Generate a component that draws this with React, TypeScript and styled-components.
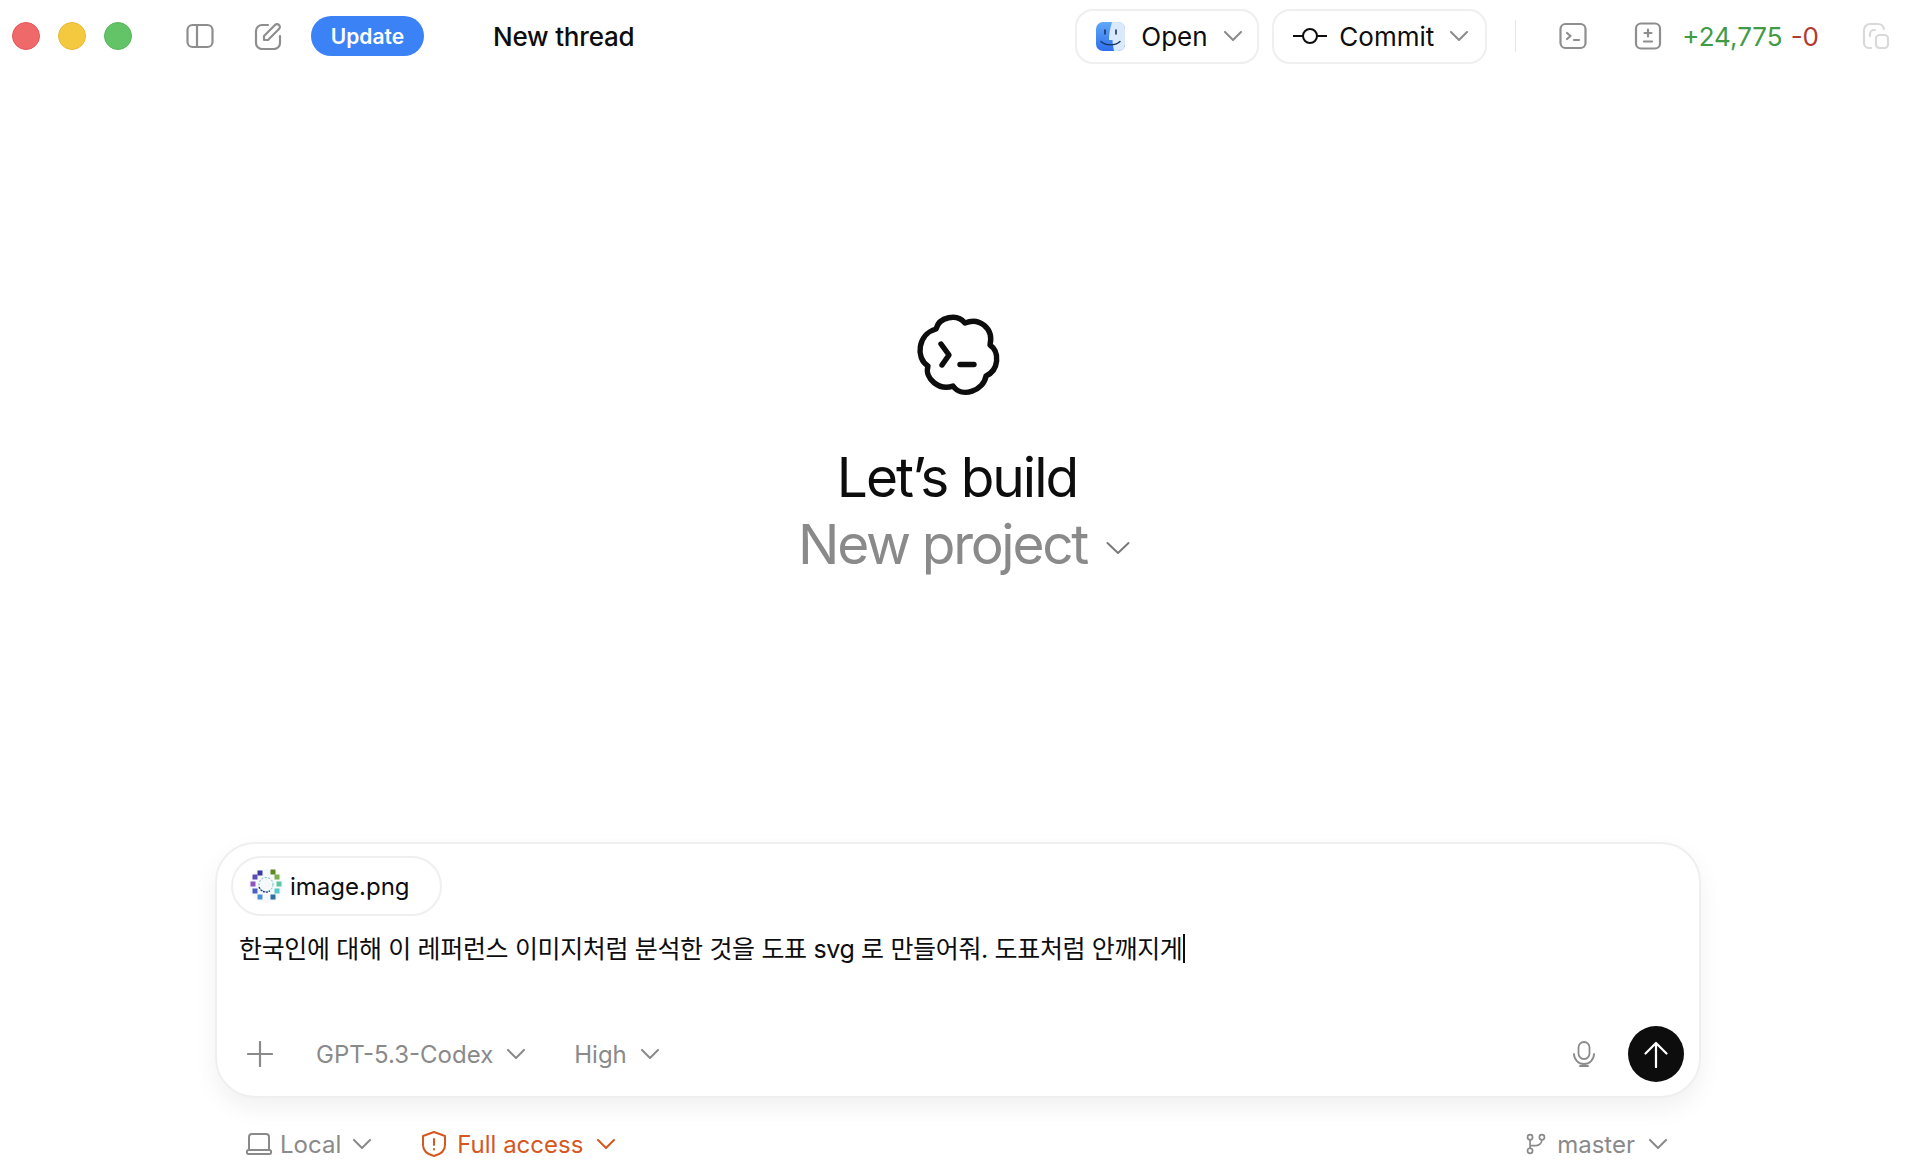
import styled, { createGlobalStyle } from "styled-components";

const GlobalStyle = createGlobalStyle`
    html, body {
        margin: 0;
        padding: 0;
        background: #ffffff;
    }
    body {
        font-family: Inter, "Noto Sans CJK KR", sans-serif;
        color: #0d0d0d;
    }
`;

const Page = styled.div`
    height: 100vh;
    display: flex;
    flex-direction: column;
    overflow: hidden;
`;

const TopBar = styled.header`
    height: 72px;
    flex: none;
    display: flex;
    align-items: center;
    padding: 0 34px 0 12px;
`;

const Lights = styled.div`
    display: flex;
    gap: 18px;
    margin-right: 54px;
`;

const Light = styled.span<{ $color: string; $edge: string }>`
    width: 28px;
    height: 28px;
    border-radius: 50%;
    box-sizing: border-box;
    background: ${(p) => p.$color};
    border: 1px solid ${(p) => p.$edge};
`;

const BarIcon = styled.svg<{ $after: number; $faint?: boolean }>`
    flex: none;
    width: 28px;
    height: 28px;
    margin-right: ${(p) => p.$after}px;
    fill: none;
    stroke: ${(p) => (p.$faint ? "#d9d9d9" : "#8e8e8e")};
    stroke-width: 2.2;
    stroke-linecap: round;
    stroke-linejoin: round;
`;

const UpdateButton = styled.button`
    width: 113px;
    height: 40px;
    border: 0;
    border-radius: 20px;
    background: #3b82f6;
    color: #ffffff;
    font: 600 21px Inter, sans-serif;
    padding: 0;
    margin-right: 69px;
`;

const ThreadTitle = styled.div`
    font-size: 26px;
    font-weight: 500;
    letter-spacing: -0.2px;
`;

const Spacer = styled.div`
    flex: 1;
`;

const BarButton = styled.div<{ $width: number; $after: number; $gap: number }>`
    box-sizing: border-box;
    width: ${(p) => p.$width}px;
    height: 55px;
    margin-right: ${(p) => p.$after}px;
    border: 2px solid #efefef;
    border-radius: 18px;
    display: flex;
    align-items: center;
    padding: 0 17px 0 19px;
    font-size: 26px;
    gap: ${(p) => p.$gap}px;
`;

const Divider = styled.div`
    width: 1px;
    height: 32px;
    background: #e6e6e6;
    margin-right: 43px;
`;

const DiffCount = styled.div`
    display: flex;
    gap: 8px;
    font-size: 26px;
    margin-right: 43px;
`;

const Added = styled.span`
    color: #3f9b45;
`;

const Removed = styled.span`
    color: #b03a30;
`;

const ChevronIcon = styled.svg<{ $push?: boolean }>`
    flex: none;
    width: 18px;
    height: 10px;
    margin-left: ${(p) => (p.$push ? "auto" : "0")};
    color: #8a8a8a;
    fill: none;
    stroke: currentColor;
    stroke-width: 2;
    stroke-linecap: round;
    stroke-linejoin: round;
`;

const Hero = styled.main`
    display: flex;
    flex-direction: column;
    align-items: center;
    padding: 236px 8px 0 0;
`;

const Logo = styled.svg`
    width: 96px;
    height: 96px;
    margin-bottom: 40px;
    fill: none;
    stroke: #0d0d0d;
    stroke-width: 5.4;
    stroke-linecap: round;
    stroke-linejoin: round;
`;

const Title = styled.h1`
    margin: 0 2px 0 0;
    font-size: 55px;
    line-height: 67px;
    font-weight: 400;
    letter-spacing: -2px;
`;

const ProjectRow = styled.div`
    display: flex;
    align-items: center;
    gap: 19px;
    margin-left: 12px;
    font-size: 55px;
    line-height: 67px;
    letter-spacing: -2.3px;
    color: #8a8a8a;
`;

const ProjectChevron = styled.svg`
    width: 24px;
    height: 14px;
    margin-top: 6px;
    fill: none;
    stroke: #7a7a7a;
    stroke-width: 2;
    stroke-linecap: round;
    stroke-linejoin: round;
`;

const Composer = styled.section`
    flex: none;
    box-sizing: border-box;
    width: 1486px;
    height: 256px;
    margin: auto 0 0 215px;
    border: 2px solid #efefef;
    border-radius: 40px;
    background: #ffffff;
    box-shadow: 0 10px 24px rgba(0, 0, 0, 0.06);
    padding: 12px 15px 14px 14px;
    display: flex;
    flex-direction: column;
`;

const Chip = styled.div`
    box-sizing: border-box;
    width: 211px;
    height: 60px;
    border: 2px solid #efefef;
    border-radius: 30px;
    display: flex;
    align-items: center;
    gap: 7px;
    padding-left: 16px;
    font-size: 24px;
`;

const Thumb = styled.svg`
    width: 34px;
    height: 34px;
    flex: none;
`;

const Prompt = styled.div`
    margin: 15px 0 0 8px;
    font-size: 25px;
    line-height: 36px;
    letter-spacing: -0.35px;
`;

const Caret = styled.span`
    display: inline-block;
    width: 2px;
    height: 29px;
    margin-left: 1px;
    vertical-align: -5px;
    background: #0d0d0d;
`;

const ComposerBar = styled.div`
    margin-top: auto;
    display: flex;
    align-items: center;
    color: #8a8a8a;
`;

const PlusIcon = styled.svg`
    flex: none;
    width: 26px;
    height: 26px;
    margin: 0 43px 0 16px;
    fill: none;
    stroke: #8a8a8a;
    stroke-width: 2.2;
    stroke-linecap: round;
`;

const Picker = styled.div<{ $after?: number }>`
    display: flex;
    align-items: center;
    gap: 14px;
    margin-right: ${(p) => p.$after ?? 0}px;
    font-size: 24px;
`;

const MicIcon = styled.svg`
    flex: none;
    width: 22px;
    height: 26px;
    margin: 0 33px 0 auto;
    fill: none;
    stroke: #8a8a8a;
    stroke-width: 1.8;
    stroke-linecap: round;
`;

const SendButton = styled.div`
    width: 56px;
    height: 56px;
    border-radius: 50%;
    background: #0d0d0d;
    display: flex;
    align-items: center;
    justify-content: center;
`;

const SendArrow = styled.svg`
    width: 24px;
    height: 27px;
    fill: none;
    stroke: #ffffff;
    stroke-width: 2.2;
    stroke-linecap: round;
    stroke-linejoin: round;
`;

const Footer = styled.footer`
    flex: none;
    height: 74px;
    box-sizing: border-box;
    padding: 18px 257px 0 246px;
    display: flex;
    align-items: center;
`;

const FooterItem = styled.div<{ $warn?: boolean; $after?: number; $right?: boolean; $gap?: number }>`
    display: flex;
    align-items: center;
    gap: ${(p) => p.$gap ?? 10}px;
    margin-right: ${(p) => p.$after ?? 0}px;
    margin-left: ${(p) => (p.$right ? "auto" : "0")};
    font-size: 24px;
    color: ${(p) => (p.$warn ? "#d4581f" : "#8a8a8a")};

    ${ChevronIcon} {
        margin-left: 4px;
        color: inherit;
    }
`;

const SmallIcon = styled.svg<{ $size?: number }>`
    flex: none;
    width: ${(p) => p.$size ?? 26}px;
    height: ${(p) => p.$size ?? 26}px;
    fill: none;
    stroke: currentColor;
    stroke-width: 2;
    stroke-linecap: round;
    stroke-linejoin: round;
`;

const Chev = ({ push }: { push?: boolean }) => (
    <ChevronIcon $push={push} viewBox="0 0 18 10">
        <path d="M1 1l8 8 8-8" />
    </ChevronIcon>
);

const FinderIcon = () => (
    <svg width="29" height="29" viewBox="0 0 29 29" style={{ flex: "none" }}>
        <defs>
            <linearGradient id="finderBlue" x1="0" y1="0" x2="0" y2="1">
                <stop offset="0" stopColor="#5fa8f7" />
                <stop offset="1" stopColor="#2f6fee" />
            </linearGradient>
        </defs>
        <rect width="29" height="29" rx="7" fill="url(#finderBlue)" />
        <path d="M16 0H22a7 7 0 0 1 7 7V22a7 7 0 0 1-7 7H18C17 24 16.500 21 16.500 18H13C13 10 15 4 16 0Z" fill="#dbe9fc" />
        <path d="M9 8v4M20 8v4" stroke="#17345f" strokeWidth="1.6" strokeLinecap="round" />
        <path d="M5 19.500C10 24 19 24 24 19.500" stroke="#17345f" strokeWidth="1.4" fill="none" strokeLinecap="round" />
    </svg>
);

const thumbDots: [number, number, string][] = [
    [11, 4, "#3b3a9e"], [24, 3, "#5c8a1e"], [6, 8, "#5a4fb5"], [28, 8, "#7bb04a"],
    [4, 15, "#8e55c0"], [30, 15, "#5cc7a5"], [6, 22, "#4a5fc0"], [28, 22, "#52c8c8"],
    [11, 28, "#4a90d0"], [24, 28, "#2f6f9e"],
];

const ThumbIcon = () => (
    <Thumb viewBox="0 0 34 34">
        <circle cx="17" cy="17" r="17" fill="#f7f8fa" />
        {thumbDots.map(([x, y, c]) => (
            <rect key={`${x}-${y}`} x={x - 2.5} y={y - 2.5} width="5" height="5" fill={c} />
        ))}
        <circle cx="17" cy="15.500" r="7" fill="none" stroke="#5cc0c8" strokeWidth="1" strokeDasharray="2 1.500" />
        <path d="M10 18a7.500 7.500 0 0 0 11 4" fill="none" stroke="#27307e" strokeWidth="1.2" strokeDasharray="2 1" />
    </Thumb>
);

export default function App() {
    return (
        <Page>
            <GlobalStyle />
            <TopBar>
                <Lights>
                    <Light $color="#f0696a" $edge="#e4565a" />
                    <Light $color="#f4c83f" $edge="#e8bb36" />
                    <Light $color="#62c466" $edge="#55b55a" />
                </Lights>
                <BarIcon $after={40} viewBox="0 0 28 28">
                    <rect x="1.500" y="3" width="25" height="22" rx="5" />
                    <path d="M11 3v22" />
                </BarIcon>
                <BarIcon $after={29} viewBox="0 0 28 28">
                    <path d="M14 3H8a6 6 0 0 0-6 6v12a6 6 0 0 0 6 6h12a6 6 0 0 0 6-6v-7" />
                    <path d="M10 18v-4L21 3a2.500 2.500 0 0 1 4 4L14 18z" />
                </BarIcon>
                <UpdateButton>Update</UpdateButton>
                <ThreadTitle>New thread</ThreadTitle>
                <Spacer />
                <BarButton $width={184} $after={13} $gap={16}>
                    <FinderIcon />
                    Open
                    <Chev push />
                </BarButton>
                <BarButton $width={215} $after={28} $gap={12}>
                    <svg width="34" height="20" viewBox="0 0 34 20" fill="none" stroke="#0d0d0d" strokeWidth="2" style={{ flex: "none" }}>
                        <circle cx="17" cy="10" r="7" />
                        <path d="M0 10h10M24 10h10" />
                    </svg>
                    Commit
                    <Chev push />
                </BarButton>
                <Divider />
                <BarIcon $after={47} viewBox="0 0 28 28">
                    <rect x="1.500" y="2" width="25" height="24" rx="5" />
                    <path d="M8 11l3.500 3L8 17M15 18h5" />
                </BarIcon>
                <BarIcon $after={20} viewBox="0 0 28 28">
                    <rect x="2" y="1.500" width="24" height="25" rx="5" />
                    <path d="M14 7.500v7M10.500 11h7M10 19.500h8" />
                </BarIcon>
                <DiffCount>
                    <Added>+24,775</Added>
                    <Removed>-0</Removed>
                </DiffCount>
                <BarIcon $after={0} $faint viewBox="0 0 28 28">
                    <path d="M9 26H7a5 5 0 0 1-5-5V8a6 6 0 0 1 6-6h8a6 6 0 0 1 6 5" />
                    <path d="M8 14v-2a4 4 0 0 1 4-4h1" />
                    <rect x="14" y="13" width="12" height="13" rx="3.500" />
                </BarIcon>
            </TopBar>
            <Hero>
                <Logo viewBox="0 0 96 96">
                    <path d="M26 21C29 9 47 5 55 15C69 9 84 20 80 37C90 44 89 62 76 68C74 82 52 91 43 78C30 83 14 71 18 58C5 50 8 26 26 21Z" />
                    <path d="M31 36l8 11-7 10M50 56.500h14" />
                </Logo>
                <Title>Let’s build</Title>
                <ProjectRow>
                    New project
                    <ProjectChevron viewBox="0 0 24 14">
                        <path d="M1.500 2l10.500 10L22.500 2" />
                    </ProjectChevron>
                </ProjectRow>
            </Hero>
            <Composer>
                <Chip>
                    <ThumbIcon />
                    image.png
                </Chip>
                <Prompt>
                    한국인에 대해 이 레퍼런스 이미지처럼 분석한 것을 도표 svg 로 만들어줘. 도표처럼 안깨지게
                    <Caret />
                </Prompt>
                <ComposerBar>
                    <PlusIcon viewBox="0 0 26 26">
                        <path d="M13 1v24M1 13h24" />
                    </PlusIcon>
                    <Picker $after={49}>
                        GPT-5.3-Codex
                        <Chev />
                    </Picker>
                    <Picker>
                        High
                        <Chev />
                    </Picker>
                    <MicIcon viewBox="0 0 22 26">
                        <rect x="5.500" y="1" width="11" height="17" rx="5.500" />
                        <path d="M1 13a10 10 0 0 0 20 0M11 23v2M7 25h8" />
                    </MicIcon>
                    <SendButton>
                        <SendArrow viewBox="0 0 24 27">
                            <path d="M12 26V2M1.500 12.500 12 2l10.500 10.500" />
                        </SendArrow>
                    </SendButton>
                </ComposerBar>
            </Composer>
            <Footer>
                <FooterItem $after={50} $gap={8}>
                    <SmallIcon viewBox="0 0 26 26">
                        <path d="M3 19V6a3 3 0 0 1 3-3h14a3 3 0 0 1 3 3v13" />
                        <rect x="1" y="19" width="24" height="4" rx="1.500" />
                    </SmallIcon>
                    Local
                    <Chev />
                </FooterItem>
                <FooterItem $warn>
                    <SmallIcon viewBox="0 0 26 26">
                        <path d="M13 1 24 5v9c0 6-5 9.500-11 11C7 23.500 2 20 2 14V5z" />
                        <path d="M13 8v6M13 18v.5" />
                    </SmallIcon>
                    Full access
                    <Chev />
                </FooterItem>
                <FooterItem $right>
                    <SmallIcon $size={22} viewBox="0 0 26 26">
                        <circle cx="6" cy="5" r="3" />
                        <circle cx="6" cy="21" r="3" />
                        <circle cx="20" cy="5" r="3" />
                        <path d="M6 8v10M6 15h7a7 7 0 0 0 7-7" />
                    </SmallIcon>
                    master
                    <Chev />
                </FooterItem>
            </Footer>
        </Page>
    );
}
